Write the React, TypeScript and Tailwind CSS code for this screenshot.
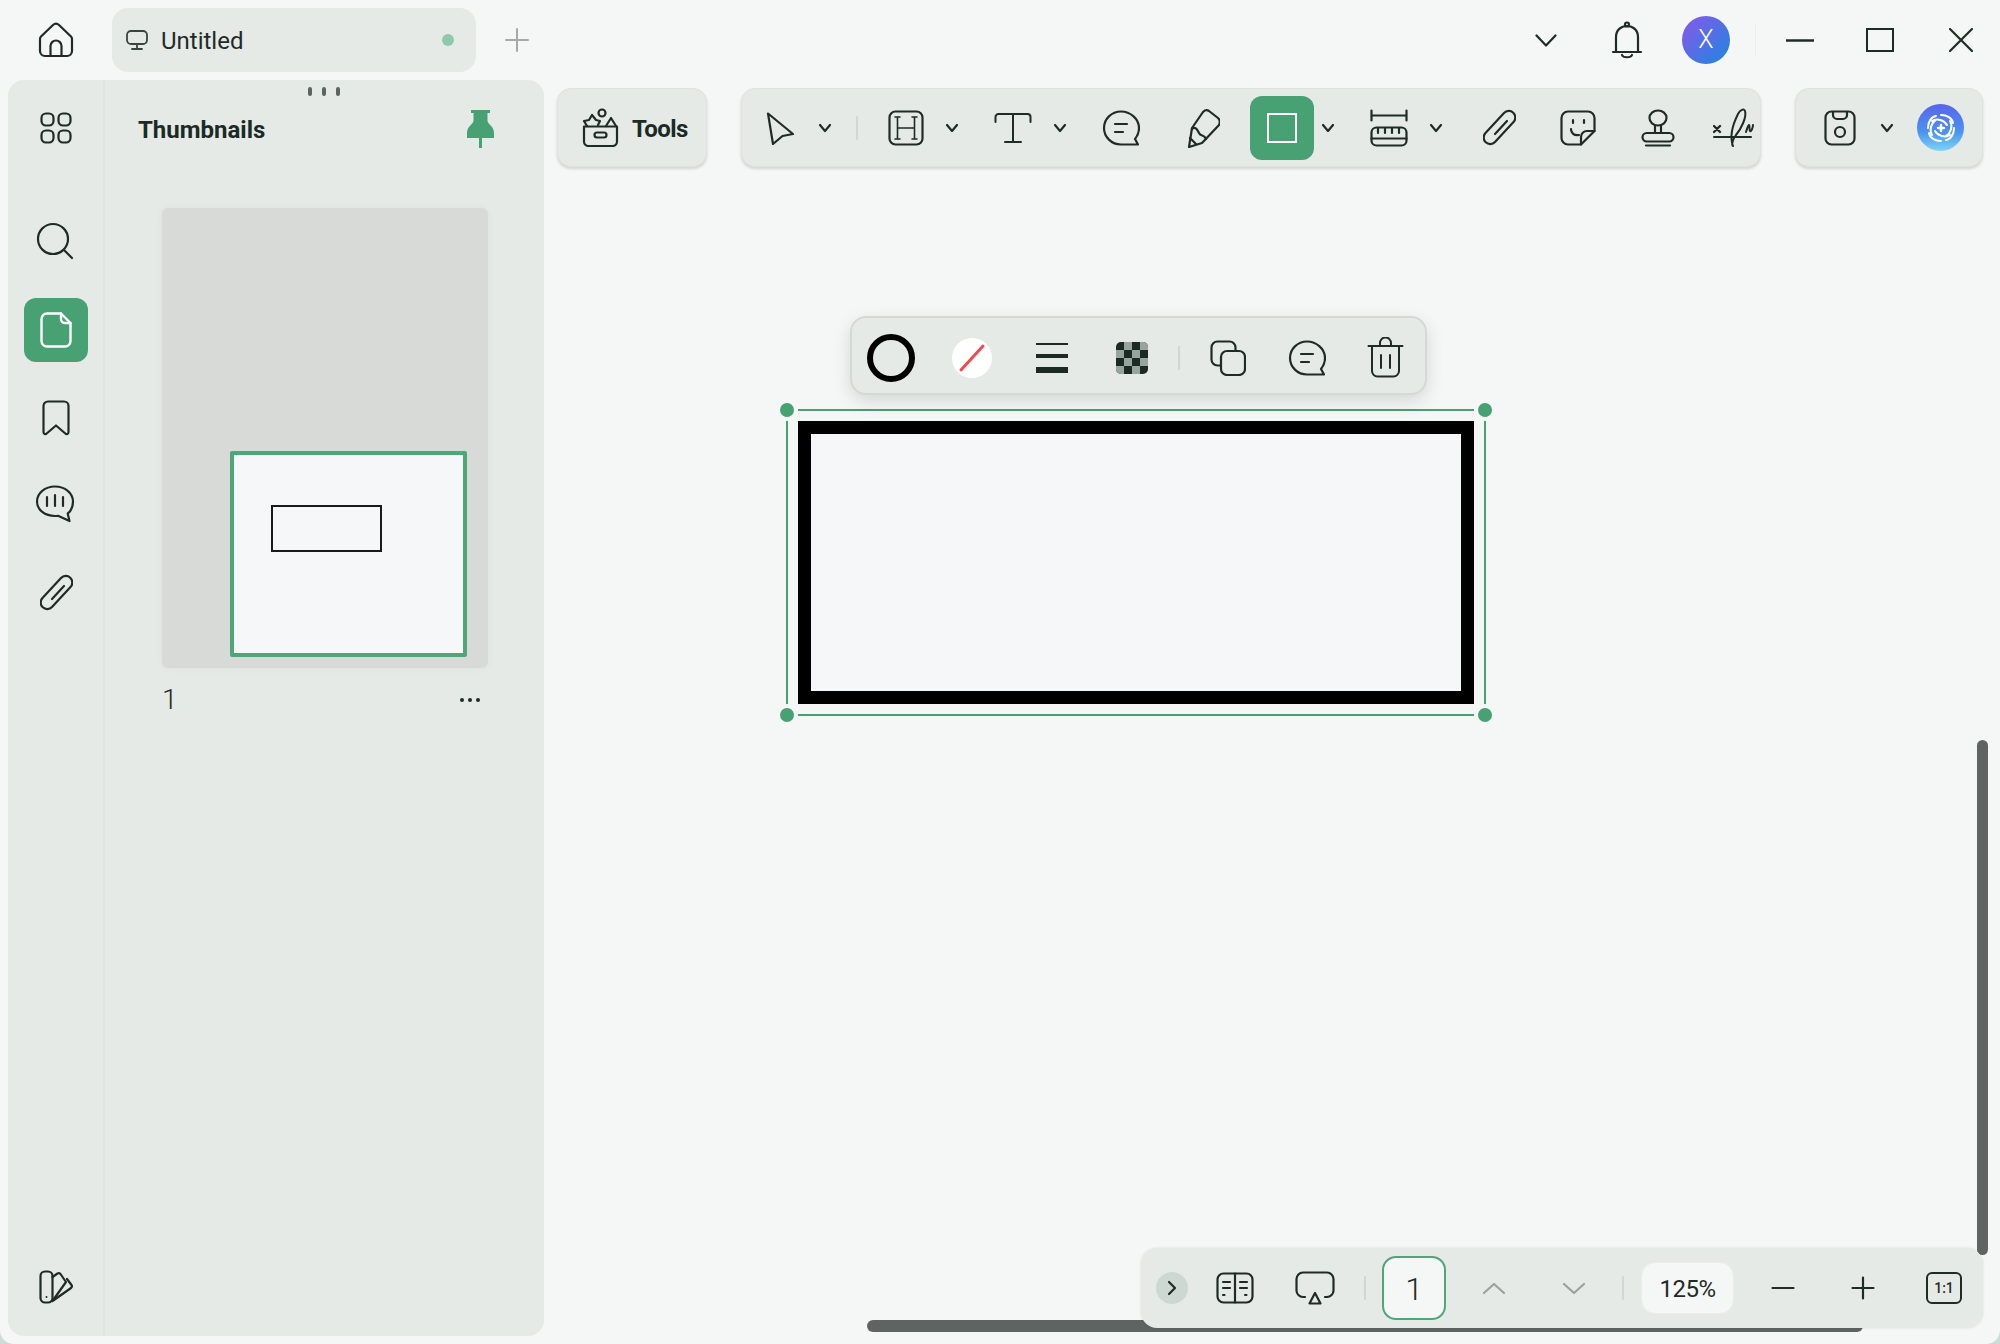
import { ReactNode } from "react";

const font = "font-['Roboto','Noto_Sans',sans-serif]";

const Ic = ({
  w,
  h,
  className = "",
  sw = 2.2,
  children,
}: {
  w: number;
  h: number;
  className?: string;
  sw?: number;
  children: ReactNode;
}) => (
  <svg
    width={w}
    height={h}
    viewBox={`0 0 ${w} ${h}`}
    fill="none"
    stroke="currentColor"
    strokeWidth={sw}
    strokeLinecap="round"
    strokeLinejoin="round"
    className={`shrink-0 ${className}`}
  >
    {children}
  </svg>
);

const Chevron = ({ className = "" }: { className?: string }) => (
  <Ic w={14} h={10} className={className}>
    <path d="M2 2l5 6 5-6" />
  </Ic>
);

const Comment = ({ className = "" }: { className?: string }) => (
  <Ic w={38} h={36} className={className}>
    <path d="M19 1.500C9.500 1.500 2 9 2 18s7.500 16.500 17 16.500h17l-3-5.500c2.500-3 4-7 4-11C37 9 28.500 1.500 19 1.500z" />
    <path d="M13 14h12M13 22h8" />
  </Ic>
);

const Clip = ({ className = "" }: { className?: string }) => (
  <Ic w={33} h={37} className={className}>
    <path d="M21 4a6.500 6.500 0 0 1 9.500 9L12 33a6.500 6.500 0 0 1-9.500-9z" />
    <path d="M12 25L24 12" />
  </Ic>
);

const Divider = ({ className = "" }: { className?: string }) => (
  <div className={`w-[2px] h-[24px] bg-[#d2d7d4] shrink-0 ${className}`} />
);

const Rail = () => (
  <div className="w-[97px] shrink-0 border-r-2 border-[#e0e4e1] relative flex flex-col items-center text-[#1f2b26]">
    <Ic w={32} h={32} className="mt-[32px]">
      <rect x="1.500" y="1.500" width="12" height="12" rx="4.500" />
      <rect x="18.500" y="1.500" width="12" height="12" rx="4.500" />
      <rect x="1.500" y="18.500" width="12" height="12" rx="4.500" />
      <rect x="18.500" y="18.500" width="12" height="12" rx="4.500" />
    </Ic>
    <Ic w={38} h={38} className="mt-[78px] -ml-[2px]">
      <circle cx="17" cy="17" r="15" />
      <path d="M28 28l8 8" />
    </Ic>
    <div className="mt-[38px] w-[64px] h-[64px] rounded-[12px] bg-[#47a173] flex items-center justify-center text-white">
      <Ic w={32} h={36} sw={2.4}>
        <path d="M21 1.500H7a5.500 5.500 0 0 0-5.500 5.500v22A5.500 5.500 0 0 0 7 34.500h18a5.500 5.500 0 0 0 5.500-5.500V11z" />
        <path d="M21 1.500V7a4 4 0 0 0 4 4h5.500" />
      </Ic>
    </div>
    <Ic w={28} h={36} className="mt-[38px]">
      <path d="M1.500 32V6a4.500 4.500 0 0 1 4.500-4.500h16a4.500 4.500 0 0 1 4.500 4.500v26c0 2-1.800 2.800-3.200 1.500L14 25.500l-9.300 8C3.300 34.800 1.500 34 1.500 32z" />
    </Ic>
    <Ic w={40} h={38} className="mt-[49px] -ml-[2px]">
      <path d="M20 1.500C10 1.500 2 8 2 16.500S10 31 20 31c1.500 0 3-.2 3-.2L34.500 36l-1.800-7.500C36 26 38 21.500 38 16.500 38 8 30 1.500 20 1.500z" />
      <path d="M12 12v9M20 10v11M28 12v9" />
    </Ic>
    <Clip className="mt-[51px] ml-[2px]" />
    <Ic w={34} h={34} className="absolute top-[1190px] left-[31px]">
      <rect x="1.500" y="1.500" width="12" height="31" rx="4.500" />
      <path d="M13.500 7l5-3.500c1-.5 2-.5 3 .5l5.500 8-13.500 19" />
      <path d="M15 30l17-12c1-1 1.200-2 .5-3L28 9" />
      <circle cx="7.500" cy="27" r="1" fill="currentColor" stroke="none" />
    </Ic>
  </div>
);

const ThumbPanel = () => (
  <div className="flex-1 relative pt-[7px]">
    <div className="flex justify-center gap-[10px] h-[9px] -ml-[2px]">
      <span className="w-[4px] h-[9px] rounded-full bg-[#5a6662]" />
      <span className="w-[4px] h-[9px] rounded-full bg-[#5a6662]" />
      <span className="w-[4px] h-[9px] rounded-full bg-[#5a6662]" />
    </div>
    <div className="flex items-center justify-between pl-[33px] pr-[50px] mt-[14px] h-[38px]">
      <span className="pt-[2px] text-[24px] leading-none font-bold text-[#1c2a25]">Thumbnails</span>
      <svg width="27" height="38" viewBox="0 0 27 38" className="text-[#47a173]" fill="currentColor">
        <path d="M4 0h19v3h-2.500v8c1 4 6.500 5 6.500 12v5H15v10h-3V28H0v-5c0-7 5.500-8 6.500-12V3H4z" />
      </svg>
    </div>
    <div className="ml-[57px] mt-[60px] w-[326px] h-[460px] rounded-[6px] bg-[#d8dad7] shadow-[0_0_8px_rgba(0,0,0,0.04)] flex flex-col justify-end items-end pr-[21px] pb-[11px]">
      <div className="w-[237px] h-[206px] border-[4px] border-[#4fa777] rounded-[2px] bg-[#f6f7f9] pl-[37px] pt-[50px]">
        <div className="w-[111px] h-[47px] border-[2px] border-[#1a1a1a] bg-[#f6f7f9]" />
      </div>
    </div>
    <div className="flex items-center justify-between ml-[57px] w-[326px] mt-[16px] pr-[8px] text-[#1f2b26]">
      <span className="text-[28px] leading-[32px] font-light">1</span>
      <div className="flex gap-[4px]">
        <span className="w-[4px] h-[4px] rounded-full bg-[#1f2b26]" />
        <span className="w-[4px] h-[4px] rounded-full bg-[#1f2b26]" />
        <span className="w-[4px] h-[4px] rounded-full bg-[#1f2b26]" />
      </div>
    </div>
  </div>
);

const Bar = ({ className = "", children }: { className?: string; children: ReactNode }) => (
  <div
    className={`h-[79px] shrink-0 flex items-center rounded-[14px] bg-[#e6eae7] border border-[#dfe3e0] shadow-[0_2px_3px_rgba(0,0,0,0.14)] text-[#1f2b26] ${className}`}
  >
    {children}
  </div>
);

const Toolbars = () => (
  <div className="flex pt-[8px] pl-[13px] gap-[34px]">
    <Bar className="w-[150px] pl-[24px]">
      <Ic w={37} h={39}>
        <path d="M2 18.500h33v15a4.500 4.500 0 0 1-4.500 4.500h-24A4.500 4.500 0 0 1 2 33.500z" />
        <rect x="12.500" y="24.500" width="12" height="5" rx="2.500" />
        <path d="M5 18l-3-5 5-1 3-5 4 5 4 1-2 4" />
        <circle cx="20" cy="5" r="3.500" />
        <path d="M24 18l5-8 5 8" />
      </Ic>
      <span className="ml-[13px] pt-[2px] text-[24px] font-bold leading-none tracking-[-0.6px] text-[#1c2a25]">Tools</span>
    </Bar>
    <Bar className="w-[1020px] pl-[24px]">
      <Ic w={29} h={34}>
        <path d="M2 2.500l25 20.500-10.500 2L7 33 2 2.500z" />
      </Ic>
      <Chevron className="ml-[23px]" />
      <Divider className="ml-[24px]" />
      <Ic w={36} h={36} className="ml-[30px]">
        <rect x="1.500" y="1.500" width="33" height="33" rx="6" />
        <path d="M9.500 7v22M26.500 7v22M9.500 18h17M7 7h5M24 7h5M7 29h5M24 29h5" strokeWidth={1.6} />
      </Ic>
      <Chevron className="ml-[21px]" />
      <Ic w={38} h={32} sw={2} className="ml-[35px]">
        <path d="M1.500 10V5a3 3 0 0 1 3-3h29a3 3 0 0 1 3 3v5M19 2v28M11 30h16" />
      </Ic>
      <Chevron className="ml-[21px]" />
      <Comment className="ml-[35px]" />
      <Ic w={33} h={40} className="ml-[47px]">
        <path d="M5 20L16 4q3-3 6-1l9 7q3 3 1 7L15 35 2 39z" />
        <path d="M5 21c3-3 5 0 7 4s5 1 7 6" />
        <path d="M3 30l6 6" />
      </Ic>
      <div className="ml-[30px] w-[64px] h-[64px] rounded-[12px] bg-[#47a173] flex items-center justify-center">
        <div className="w-[30px] h-[30px] border-[2px] border-white" />
      </div>
      <Chevron className="ml-[7px]" />
      <Ic w={38} h={38} className="ml-[35px]">
        <path d="M1.500 1.500v10M36.500 1.500v10M1.500 6.500h35" />
        <rect x="1.500" y="18.500" width="35" height="18" rx="5" />
        <path d="M1.500 29.500h35M8 19v5M15 19v5M22 19v5M29 19v5" />
      </Ic>
      <Chevron className="ml-[21px]" />
      <Clip className="ml-[40px]" />
      <Ic w={36} h={36} className="ml-[44px]">
        <path d="M21 34.500H8A6.500 6.500 0 0 1 1.500 28V8A6.500 6.500 0 0 1 8 1.500h20A6.500 6.500 0 0 1 34.500 8v13z" />
        <path d="M21 34.500V27a6 6 0 0 1 6-6h7.500" />
        <path d="M11 19c0 4 3 7 8 6M13 10v3M24 10v3" />
      </Ic>
      <Ic w={34} h={38} className="ml-[45px]">
        <ellipse cx="17" cy="9" rx="8.500" ry="7.500" />
        <path d="M14 17v7M20 17v7" />
        <rect x="1.500" y="24" width="31" height="8.500" rx="4.200" />
        <path d="M5 36.500h24" />
      </Ic>
      <Ic w={41} h={40} className="ml-[38px]" sw={2}>
        <path d="M1 29h37" />
        <path d="M1 18l6 6M7 18l-6 6" strokeWidth={2.4} />
        <path d="M20 38c-3-8-1-20 5-32 2-4 6-6 7-3 2 6-4 18-9 24-3 4-5 10-3 11z" />
        <path d="M33 24c1-3 2-7 3-7s0 5 1 6 3-3 3-6" />
      </Ic>
    </Bar>
    <Bar className="w-[188px] pl-[28px]">
      <Ic w={32} h={36}>
        <rect x="1.500" y="1.500" width="29" height="33" rx="6" />
        <path d="M9 2v3a4 4 0 0 0 4 4h6a4 4 0 0 0 4-4V2" />
        <circle cx="16" cy="22" r="5" />
      </Ic>
      <Chevron className="ml-[24px]" />
      <div className="ml-[23px] w-[47px] h-[47px] rounded-full bg-[linear-gradient(180deg,#5a63ec_0%,#4a94ef_60%,#7fd4f5_100%)] flex items-center justify-center text-white">
        <Ic w={32} h={32} sw={2}>
          <path d="M16 3c6 0 11 3 12 8M29 16c0 6-3 11-8 12M16 29c-6 0-11-3-12-8M3 16c0-6 3-11 8-12" />
          <path d="M7 9c5-3 12-1 15 4M25 9c3 5 1 12-4 15M25 23c-5 3-12 1-15-4M7 23c-3-5-1-12 4-15" />
          <path d="M16 13v6M13 16h6" strokeWidth={2.4} />
        </Ic>
      </div>
    </Bar>
  </div>
);

const Handle = ({ className }: { className: string }) => (
  <span className={`absolute w-[14px] h-[14px] rounded-full bg-[#47a173] ring-[4px] ring-[#f4f7f5] ${className}`} />
);

const FloatBar = () => (
  <div className="absolute left-[306px] top-[149px] w-[577px] h-[79px] pl-[15px] pt-[4px] flex items-center rounded-[16px] bg-[#e6eae7] border-2 border-[#d4d9d6] shadow-[0_6px_18px_rgba(0,0,0,0.13)] text-[#1f2b26]">
    <div className="w-[48px] h-[48px] rounded-full border-[6px] border-black shrink-0" />
    <div className="ml-[37px] w-[40px] h-[40px] rounded-full bg-white flex items-center justify-center shrink-0">
      <Ic w={30} h={30} sw={3} className="text-[#ef4b50]">
        <path d="M4 27L26 3" />
      </Ic>
    </div>
    <div className="ml-[44px] w-[32px] flex flex-col gap-[9px] shrink-0">
      <div className="h-[2px] bg-[#1c2a25]" />
      <div className="h-[4px] bg-[#1c2a25]" />
      <div className="h-[6px] bg-[#1c2a25]" />
    </div>
    <div className="ml-[48px] w-[32px] h-[32px] rounded-[5px] overflow-hidden grid grid-cols-4 grid-rows-4 bg-[#1c2a25] shrink-0">
      <span />
      <span className="bg-[#98a59f]" />
      <span />
      <span className="bg-[#98a59f]" />
      <span className="bg-[#98a59f]" />
      <span />
      <span className="bg-[#98a59f]" />
      <span />
      <span />
      <span className="bg-[#98a59f]" />
      <span />
      <span className="bg-[#98a59f]" />
      <span className="bg-[#98a59f]" />
      <span />
      <span className="bg-[#98a59f]" />
      <span />
    </div>
    <Divider className="ml-[30px]" />
    <Ic w={36} h={36} className="ml-[30px]">
      <rect x="1.500" y="1.500" width="24" height="24" rx="6" />
      <rect x="11" y="11" width="24" height="24" rx="6" fill="#e6eae7" />
    </Ic>
    <Comment className="ml-[42px]" />
    <Ic w={37} h={41} sw={2} className="ml-[41px]">
      <path d="M1.500 9h34" />
      <path d="M13 9V6a5.500 5.500 0 0 1 11 0v3" />
      <path d="M5 9v25a5.500 5.500 0 0 0 5.500 5.500h16a5.500 5.500 0 0 0 5.500-5.500V9" />
      <path d="M14 18v13M23 18v13" />
    </Ic>
  </div>
);

const Shape = () => (
  <div className="absolute left-[242px] top-[242px] w-[700px] h-[307px] border-2 border-[#47a173] pt-[10px] px-[10px] pb-[10px]">
    <div className="h-full border-[13px] border-black bg-[#f6f7f9]" />
    <Handle className="-left-[8px] -top-[8px]" />
    <Handle className="-right-[8px] -top-[8px]" />
    <Handle className="-left-[8px] -bottom-[8px]" />
    <Handle className="-right-[8px] -bottom-[8px]" />
  </div>
);

const BottomBar = () => (
  <div className="absolute left-[597px] top-[1081px] w-[842px] h-[80px] pl-[15px] flex items-center rounded-[16px] bg-[#e6eae7] shadow-[0_0_3px_rgba(0,0,0,0.1)] text-[#1f2b26]">
    <div className="w-[32px] h-[32px] rounded-full bg-[#cdd8d1] flex items-center justify-center shrink-0">
      <Ic w={10} h={16}>
        <path d="M2 2l6 6-6 6" />
      </Ic>
    </div>
    <Ic w={38} h={32} className="ml-[28px]">
      <rect x="1.500" y="1.500" width="35" height="29" rx="6" />
      <path d="M19 1.500v29M7 10h7M7 16h7M7 23h1.500M24 10h7M24 16h7M29 23h1.500" />
    </Ic>
    <Ic w={40} h={34} className="ml-[41px]">
      <path d="M10 26H8a6.500 6.500 0 0 1-6.500-6.500V8A6.500 6.500 0 0 1 8 1.500h24A6.500 6.500 0 0 1 38.500 8v11.500A6.500 6.500 0 0 1 32 26h-2" />
      <path d="M20 22l5.500 10.500h-11z" />
    </Ic>
    <Divider className="ml-[29px]" />
    <div className="ml-[16px] w-[64px] h-[64px] pt-[2px] rounded-[14px] border-2 border-[#4fa777] bg-[#f4f7f5] flex items-center justify-center text-[32px] font-light shrink-0">
      1
    </div>
    <Ic w={24} h={13} className="ml-[36px] text-[#9aa29e]">
      <path d="M2 11L12 2l10 9" />
    </Ic>
    <Ic w={24} h={13} className="ml-[56px] text-[#9aa29e]">
      <path d="M2 2l10 9 10-9" />
    </Ic>
    <Divider className="ml-[36px]" />
    <div className="ml-[17px] w-[93px] h-[52px] pt-[2px] rounded-[14px] bg-[#f4f7f5] border border-[#e9ece9] flex items-center justify-center text-[24px] tracking-[-0.5px] shrink-0">
      125%
    </div>
    <Ic w={24} h={4} className="ml-[37px]">
      <path d="M1.500 2h21" />
    </Ic>
    <Ic w={24} h={24} className="ml-[56px]">
      <path d="M1.500 12h21M12 1.500v21" />
    </Ic>
    <div className="ml-[51px] w-[36px] h-[32px] rounded-[6px] border-[2.4px] border-[#1f2b26] flex items-center justify-center text-[14px] font-medium shrink-0">
      1:1
    </div>
  </div>
);

export default function App() {
  return (
    <div className={`w-[2000px] h-[1344px] bg-[#cfdcd6] overflow-hidden ${font}`}>
      <div className="w-full h-full rounded-br-[14px] rounded-bl-[14px] bg-[#f4f7f5] flex flex-col">
        <div className="h-[80px] flex items-center shrink-0 text-[#1f2b26]">
          <Ic w={36} h={36} className="ml-[38px]">
            <path d="M3 14.500L15 3a4.500 4.500 0 0 1 6 0l12 11.500a4 4 0 0 1 1 2.500v12a5 5 0 0 1-5 5H7a5 5 0 0 1-5-5V17a4 4 0 0 1 1-2.500z" />
            <path d="M12.500 34V24a5.500 5.500 0 0 1 11 0v10" />
          </Ic>
          <div className="ml-[38px] w-[364px] h-[64px] rounded-[16px] bg-[#e6eae7] flex items-center pl-[14px] pr-[22px]">
            <Ic w={22} h={20} sw={1.8} className="text-[#3a4540]">
              <rect x="1" y="1" width="20" height="13" rx="4" />
              <path d="M11 14v5M6 19h10" />
            </Ic>
            <span className="ml-[13px] pt-[2px] text-[24px] leading-none">Untitled</span>
            <span className="ml-auto w-[12px] h-[12px] rounded-full bg-[#8fc9ad]" />
          </div>
          <Ic w={24} h={24} sw={2} className="ml-[29px] text-[#a3aaa7]">
            <path d="M1 12h22M12 1v22" />
          </Ic>
          <Ic w={22} h={13} className="ml-[1006px]">
            <path d="M1.500 1.500L11 11.500l9.500-10" />
          </Ic>
          <Ic w={32} h={38} className="ml-[54px]">
            <path d="M2 31h28" />
            <path d="M5 31V16C5 9 10 5 16 5s11 4 11 11v15" />
            <circle cx="16" cy="3.500" r="2" />
            <path d="M11 34c1 3 9 3 10 0" />
          </Ic>
          <div className="ml-[39px] w-[48px] h-[48px] rounded-full bg-[linear-gradient(135deg,#8a57ea_0%,#1d87df_100%)] flex items-center justify-center text-white text-[25px] font-light">
            X
          </div>
          <div className="ml-[25px] w-[1px] h-[32px] bg-[#eaedea]" />
          <Ic w={28} h={3} sw={2.4} className="ml-[30px]">
            <path d="M0 1.500h28" />
          </Ic>
          <div className="ml-[52px] w-[28px] h-[24px] border-[2.4px] border-[#1f2b26]" />
          <Ic w={24} h={24} className="ml-[55px]">
            <path d="M1 1l22 22M23 1L1 23" />
          </Ic>
        </div>
        <div className="flex-1 flex min-h-0">
          <div className="ml-[8px] mb-[8px] w-[536px] shrink-0 rounded-t-[16px] rounded-b-[16px] bg-[#e6eae7] flex">
            <Rail />
            <ThumbPanel />
          </div>
          <div className="flex-1 flex flex-col relative">
            <Toolbars />
            <div className="flex-1 relative">
              <div className="absolute right-[12px] top-[573px] w-[11px] h-[515px] rounded-full bg-[#5f6462]" />
              <div className="absolute left-[323px] top-[1153px] w-[996px] h-[12px] rounded-full bg-[#5f6462]" />
              <Shape />
              <FloatBar />
              <BottomBar />
            </div>
          </div>
        </div>
      </div>
    </div>
  );
}
